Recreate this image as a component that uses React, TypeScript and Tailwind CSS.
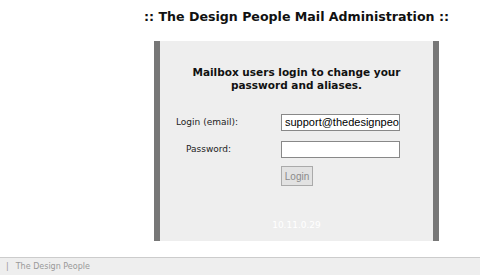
export default function App() {
  return (
    <div className="w-[480px] h-[275px] bg-white flex flex-col overflow-hidden" style={{ fontFamily: '"DejaVu Sans", sans-serif' }}>
      <div className="flex-1">
        <div className="ml-[154px] w-[285px]">
          <div className="h-[41px] pt-[9px] -mx-[30px] text-center whitespace-nowrap text-[12.6px] leading-[16px] font-bold text-[#111]">
            :: The Design People Mail Administration ::
          </div>
          <div className="h-[200px] bg-[#eeeeee] border-x-[6px] border-[#777777] flex flex-col items-center">
            <div className="mt-[25px] text-center text-[10.5px] leading-[13px] font-bold text-[#111]">
              Mailbox users login to change your<br />password and aliases.
            </div>
            <div className="mt-[22px] w-full flex flex-col gap-[10px]">
              <div className="flex items-center h-[17px]">
                <div className="w-[121px] text-right pr-[43px] text-[9px] text-[#222] whitespace-nowrap">Login (email):</div>
                <div className="w-[119px] h-[17px] bg-white border border-[#888] overflow-hidden pl-[3px] text-[11px] leading-[15px] text-[#000] whitespace-nowrap" style={{ fontFamily: '"Liberation Sans", Arial, sans-serif' }}>
                  support@thedesignpeo
                </div>
              </div>
              <div className="flex items-center h-[17px]">
                <div className="w-[121px] pl-[26px] text-[9px] text-[#222] whitespace-nowrap">Password:</div>
                <div className="w-[119px] h-[17px] bg-white border border-[#888]" />
              </div>
            </div>
            <div className="mt-[8px] w-full pl-[121px]">
              <div className="w-[32px] h-[20px] border border-[#aaa] bg-[#e2e2e2] flex items-center justify-center text-[10px] text-[#8a8a8a]" style={{ fontFamily: '"Liberation Sans", Arial, sans-serif' }}>
                Login
              </div>
            </div>
            <div className="mt-[33px] text-[9px] leading-[12px] text-white">10.11.0.29</div>
          </div>
        </div>
      </div>
      <div className="h-[18px] bg-[#eeeeee] border-t border-[#cccccc] flex items-center pl-[6px] text-[8px] text-[#999] whitespace-nowrap">
        <span>|</span>
        <span className="ml-[7px]">The Design People</span>
      </div>
    </div>
  );
}
